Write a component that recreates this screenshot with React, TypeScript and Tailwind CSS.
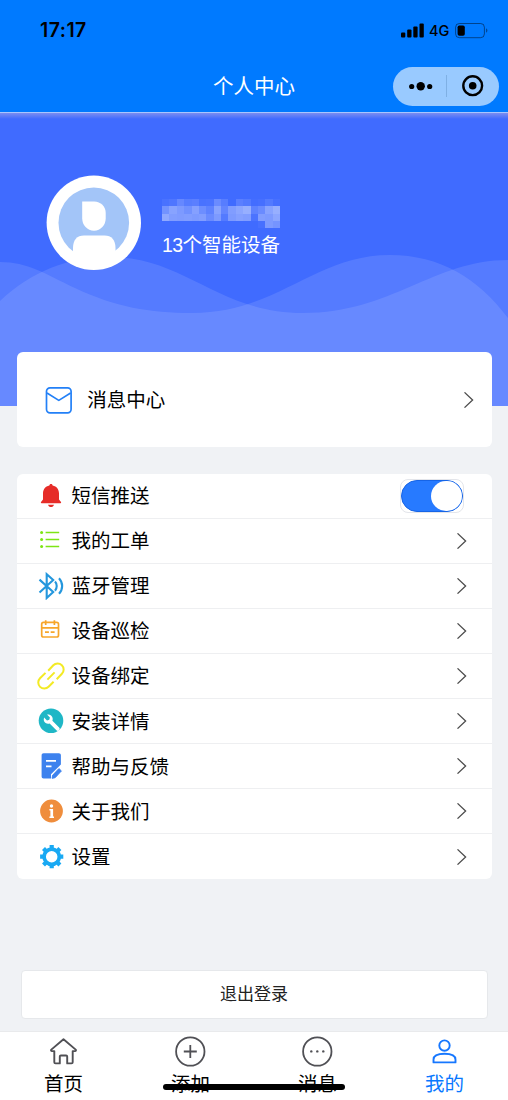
import React, { useState } from 'react';

// --- ICONS ---

const Chevron = () => (
  <svg className="w-3 h-4 shrink-0" viewBox="0 0 12 16" fill="none" stroke="#4c4c4c" strokeWidth="1.3">
    <path d="M1.5 .4 9.6 8 1.5 15.6" />
  </svg>
);

const MailIcon = () => (
  <svg className="w-7 h-7" viewBox="0 0 28 28" fill="none" stroke="#2380f7" strokeWidth="1.7" strokeLinejoin="round">
    <rect x="1.5" y="1.8" width="24.6" height="25" rx="3.5" />
    <path d="M2 7 13.8 14.4 25.6 7" />
  </svg>
);

const BellIcon = () => (
  <svg className="w-7 h-7" viewBox="0 0 28 28" fill="#e62c28">
    <path d="M14 2c1 0 1.6.7 1.6 1.6 4.2.8 6.4 4 6.4 8v5.9l2 2.6c.3.5.1 1.1-.5 1.1h-19c-.6 0-.8-.6-.5-1.1l2-2.6v-5.900c0-4 2.200-7.200 6.400-8C12.400 2.700 13 2 14 2z" />
    <path d="M11 22.800h6c-.5 1.500-1.600 2.300-3 2.300s-2.500-.8-3-2.300z" />
  </svg>
);

const ListIcon = () => (
  <svg className="w-7 h-7" viewBox="0 0 28 28" fill="#7de514">
    <circle cx="4.6" cy="5.5" r="1.5" />
    <circle cx="4.6" cy="12.5" r="1.5" />
    <circle cx="4.6" cy="19.5" r="1.5" />
    <path d="M8.600 4.700h13.600v1.600H8.600zM8.600 11.700h13.600v1.600H8.600zM8.600 18.700h13.600v1.600H8.600z" />
  </svg>
);

const BluetoothIcon = () => (
  <svg className="w-7 h-7" viewBox="0 0 28 28" fill="none" stroke="#2497dd" strokeWidth="2.1">
    <path d="M2.500 7.600 16.200 20l-6.500 6V2.200L16.200 8 2.500 20.600" />
    <path d="M18 9.500c2.300 2.500 2.300 6.500 0 9.200M22 6.200c4.200 4.400 4.200 11.300 0 15.600" />
  </svg>
);

const CalendarIcon = () => (
  <svg className="w-7 h-7" viewBox="0 0 28 28" fill="none" stroke="#f7a62a" strokeWidth="1.7">
    <rect x="4.700" y="5.300" width="16.800" height="14.700" rx="1.800" />
    <path d="M4.700 10.800h16.800M8.700 3.200v4.800M17.400 3.200v4.800M8 15.200h3.900M13.700 15.200h3.900" />
  </svg>
);

const LinkIcon = () => (
  <svg className="w-7 h-7" viewBox="0 0 28 28" fill="none" stroke="#f3ea24" strokeWidth="2">
    <path d="M11.200 8.700 16.300 3.300a5.900 5.900 0 0 1 8.600 8.500l-5.200 5.400M16.600 19.800l-5 5a5.900 5.900 0 0 1-8.600-8.500l5.500-5.400M10.400 17.600l7.200-7.200" />
  </svg>
);

const WrenchIcon = () => (
  <svg className="w-7 h-7" viewBox="0 0 28 28">
    <circle cx="14" cy="13.800" r="12.300" fill="#1fb7c6" />
    <path
      d="M10 7.600 12.900 10.500l-.6 2.300-2.300.6-2.900-2.900c-.8 2.300-.2 4.400 1.500 5.500 1.300.9 2.700 1 4 .5l6.800 6.800a1.900 1.900 0 0 0 2.700-2.700l-6.700-6.800c.7-1.700.3-3.600-.9-4.900-1.200-1.300-2.900-1.800-4.500-1.300z"
      fill="#fff"
    />
  </svg>
);

const NoteIcon = () => (
  <svg className="w-7 h-7" viewBox="0 0 28 28">
    <path d="M6.600 1.200h15.300c1.200 0 2 .8 2 2v9.200L14 22.200v4.300H6.600c-1.200 0-2-.8-2-2V3.200c0-1.200.8-2 2-2z" fill="#3d82ee" />
    <path d="M9 8.900h10M9 14.300h5.500" stroke="#fff" strokeWidth="1.700" />
    <path d="m15.600 23.300 6.300-6.700 2.500 2.300-6.300 6.800-3 .6z" fill="#3d82ee" stroke="#3d82ee" strokeLinejoin="round" />
  </svg>
);

const InfoIcon = () => (
  <svg className="w-7 h-7" viewBox="0 0 28 28">
    <circle cx="14.500" cy="14" r="11.400" fill="#ef8d3c" />
    <circle cx="14.500" cy="9" r="1.700" fill="#fff" />
    <path d="M12.400 12h3.700v7.500h.9v1.500h-4.600v-1.500h1v-6h-1z" fill="#fff" />
  </svg>
);

const GearIcon = () => (
  <svg className="w-7 h-7" viewBox="0 0 28 28" fill="none" stroke="#19a9f3">
    <circle cx="14.700" cy="13.700" r="7.600" strokeWidth="3.700" />
    <path
      d="M14.700 2.100v3.400M14.700 21.900v3.400M3.100 13.700h3.400M22.900 13.700h3.400M6.500 5.500l2.400 2.400M20.500 19.500l2.400 2.400M6.500 21.900l2.400-2.400M20.500 7.900l2.400-2.400"
      strokeWidth="4.200"
    />
  </svg>
);

const HomeIcon = () => (
  <svg className="w-8 h-8" viewBox="0 0 32 32" fill="none" stroke="#505055" strokeWidth="1.9" strokeLinejoin="round">
    <path d="M15.500 4.200 3.300 14.600c-.6.800-.2 1.500.7 1.500h2.300v11.100c0 .8.400 1.200 1.200 1.200h4.300v-6.800c0-.7.4-1.100 1.100-1.100h5.200c.7 0 1.100.4 1.100 1.100v6.800h4.300c.8 0 1.200-.4 1.200-1.200V16.100H27c.9 0 1.300-.7.7-1.500z" />
  </svg>
);

const AddIcon = () => (
  <svg className="w-8 h-8" viewBox="0 0 32 32" fill="none" stroke="#505055" strokeWidth="1.800">
    <circle cx="15.300" cy="16.500" r="14.200" />
    <path d="M15.300 10v13M8.800 16.500h13" />
  </svg>
);

const ChatIcon = () => (
  <svg className="w-8 h-8" viewBox="0 0 32 32" fill="#505055">
    <circle cx="15.300" cy="16.500" r="14.200" fill="none" stroke="#505055" strokeWidth="1.800" />
    <circle cx="9.300" cy="16.400" r="1.200" />
    <circle cx="15.300" cy="16.400" r="1.200" />
    <circle cx="21.300" cy="16.400" r="1.200" />
  </svg>
);

const UserIcon = () => (
  <svg className="w-8 h-8" viewBox="0 0 32 32" fill="none" stroke="#1677ff" strokeWidth="1.900" strokeLinejoin="round">
    <circle cx="15.500" cy="10.600" r="5.200" />
    <path d="M4.500 27.400v-2.700c0-4 4.700-5.900 11-5.900s11 1.900 11 5.900v2.700z" />
  </svg>
);

// --- DATA ---

const MENU = [
  { label: '我的工单', icon: <ListIcon /> },
  { label: '蓝牙管理', icon: <BluetoothIcon /> },
  { label: '设备巡检', icon: <CalendarIcon /> },
  { label: '设备绑定', icon: <LinkIcon /> },
  { label: '安装详情', icon: <WrenchIcon /> },
  { label: '帮助与反馈', icon: <NoteIcon /> },
  { label: '关于我们', icon: <InfoIcon /> },
  { label: '设置', icon: <GearIcon /> },
];

const TABS = [
  { label: '首页', icon: <HomeIcon /> },
  { label: '添加', icon: <AddIcon /> },
  { label: '消息', icon: <ChatIcon /> },
  { label: '我的', icon: <UserIcon />, active: true },
];

// brightness of each mosaic block over the hidden user name, in percent
const MOSAIC = [
  [5, 8, 20, 12, 14, 5, 6, 22, 12, 0, 14, 10, 2, 3, 10, 4],
  [27, 38, 32, 26, 36, 24, 16, 38, 18, 34, 40, 46, 16, 22, 38, 46],
  [42, 34, 33, 34, 32, 34, 22, 32, 10, 32, 36, 34, 6, 34, 32, 40],
  [0, 0, 0, 0, 0, 0, 0, 0, 0, 0, 0, 0, 0, 4, 32, 28],
];

// --- SECTIONS ---

const Header = () => (
  <header className="h-28 bg-[#007aff]">
    <div className="h-[62px] pl-10 pr-[20px] flex items-center justify-between font-['Inter',sans-serif] text-black">
      <span className="text-[19.5px] font-semibold tracking-[0.45px]">17:17</span>
      <div className="flex items-center">
        <svg className="w-6 h-4" viewBox="0 0 24 16">
          <rect x="0" y="9.500" width="4.300" height="5" rx="1" />
          <rect x="6.200" y="6.500" width="4.300" height="8" rx="1" />
          <rect x="12.300" y="3.500" width="4.300" height="11" rx="1" />
          <rect x="18.500" y=".5" width="4.300" height="14" rx="1" />
        </svg>
        <span className="ml-1 w-[26px] text-[14.5px] font-medium">4G</span>
        <svg className="w-[33px] h-4" viewBox="0 0 33 16">
          <rect x=".6" y=".5" width="28.800" height="14.200" rx="3.800" fill="none" stroke="#000" strokeOpacity=".45" />
          <rect x="2.600" y="2.500" width="7.200" height="10.300" rx="1.800" />
          <path d="M31.200 5.300c1.600.9 1.600 3.500 0 4.400z" fillOpacity=".5" />
        </svg>
      </div>
    </div>
    <div className="grid grid-cols-[1fr_auto_1fr] items-center h-12">
      <div />
      <h1 className="pb-px text-[20.5px] leading-none text-white">个人中心</h1>
      <div className="justify-self-end mr-[9px] w-[106px] h-[39px] rounded-full bg-[#99caff] flex items-center">
        <svg className="w-full h-full" viewBox="0 0 106 39">
          <circle cx="18.700" cy="19.500" r="2.600" />
          <circle cx="27.700" cy="19.300" r="4.200" />
          <circle cx="36.700" cy="19.500" r="2.600" />
          <path d="M53.500 8v22" stroke="#7fb0e4" />
          <circle cx="79.700" cy="18.700" r="9.400" fill="none" stroke="#000" strokeWidth="2.400" />
          <circle cx="79.700" cy="18.700" r="3.800" />
        </svg>
      </div>
    </div>
  </header>
);

const Profile = () => (
  <section className="relative h-[294px] bg-[#406bff] overflow-hidden">
    <svg className="absolute inset-0 w-full h-full" viewBox="0 0 508 294" fill="#fff" fillOpacity=".11">
      <path d="M0 150C28 150 45 162 75 176C115 195 150 201 192 201C278 201 314 143 390 143C440 143 478 166 508 206V294H0z" />
      <path d="M0 189C32 159 68 145 110 145C185 145 218 201 303 201C392 201 433 148 508 148V294H0z" />
    </svg>
    <div className="absolute inset-x-0 top-0 h-[7px] border-t border-[#a9c6ff] bg-linear-to-b from-[#7c8df0] to-transparent" />
    <div className="relative flex pl-[46px] pt-[63px]">
      <svg className="w-24 h-24 shrink-0" viewBox="0 0 96 96">
        <circle cx="47.800" cy="47.800" r="47.200" fill="#fff" />
        <circle cx="47.800" cy="47.800" r="35.300" fill="#a3c5f8" />
        <path d="M36.200 26.500h12c6.500 0 11.500 5 11.500 11.300v5.500c0 7-5 12.400-11.700 12.400s-11.800-5.400-11.800-12.400z" fill="#fff" />
        <path d="M27 77.500v-4.500c0-8 4-12.500 11-12.500h20.500c7 0 11 4.500 11 12.500v4.500L60 84H36z" fill="#fff" />
      </svg>
      <div className="ml-5 pt-[24px] text-white">
        <div className="grid grid-cols-16 w-[118px] h-[29px]">
          {MOSAIC.flat().map((level, i) => (
            <i key={i} className="bg-white" style={{ opacity: level / 100 }} />
          ))}
        </div>
        <p className="mt-[5px] text-[19.5px] leading-[24px] whitespace-nowrap font-['Liberation_Sans','Noto_Sans_CJK_SC',sans-serif]">
          <span className="tracking-[-0.6px]">13</span>个智能设备
        </p>
      </div>
    </div>
  </section>
);

const Row = ({ icon, label, children }: { icon: React.ReactNode; label: string; children: React.ReactNode }) => (
  <div className="h-[45.05px] pl-5 pr-6 flex items-center border-b border-[#eeeff1] last:border-b-0">
    {icon}
    <span className="ml-[7px] pb-[2px] grow text-[19.5px] leading-none">{label}</span>
    {children}
  </div>
);

const App = () => {
  const [smsPush, setSmsPush] = useState(true);

  return (
    <div className="w-full h-[1100px] flex flex-col overflow-hidden bg-[#f0f2f5] text-black font-['Noto_Sans_CJK_SC',sans-serif]">
      <Header />
      <Profile />

      <main className="relative -mt-[54px] pl-[16.6px] pr-[16.4px] flex flex-col">
        <div className="h-[95px] rounded-md bg-white pl-[28px] pr-[17px] flex items-center">
          <MailIcon />
          <span className="ml-[14.6px] pb-[2px] grow text-[19.5px] leading-none">消息中心</span>
          <Chevron />
        </div>

        <div className="mt-[27px] rounded-md bg-white overflow-hidden">
          <Row label="短信推送" icon={<BellIcon />}>
            <button
              onClick={() => setSmsPush(!smsPush)}
              className="mr-1 w-16 h-[34px] rounded-lg border border-[#e3e5ea]"
            >
              <span className={`h-full w-full flex rounded-full border border-[#1664e6] ${smsPush ? 'justify-end bg-[#277aff]' : 'bg-gray-300'}`}>
                <span className="w-[31px] h-full rounded-full bg-white" />
              </span>
            </button>
          </Row>
          {MENU.map((item) => (
            <Row key={item.label} label={item.label} icon={item.icon}>
              <Chevron />
            </Row>
          ))}
        </div>

        <button className="mt-[91px] mx-[4px] h-[48.5px] pb-[4px] rounded bg-white border border-[#e6e8eb] text-[17px] leading-none text-[#222]">
          退出登录
        </button>
      </main>

      {/* Tab bar, with the phone's home indicator drawn over it */}
      <nav className="relative mt-auto h-[69px] grid grid-cols-4 bg-white border-t border-[#e9eaec]">
        {TABS.map((tab) => (
          <div key={tab.label} className={`flex flex-col items-center pt-[3px] ${tab.active ? 'text-[#0878ff]' : 'text-black'}`}>
            {tab.icon}
            <span className="mt-[6px] text-[19.5px] leading-none">{tab.label}</span>
          </div>
        ))}
        <div className="absolute left-[163px] bottom-[10px] w-[182px] h-[6px] rounded-full bg-black" />
      </nav>
    </div>
  );
};

export default App;
